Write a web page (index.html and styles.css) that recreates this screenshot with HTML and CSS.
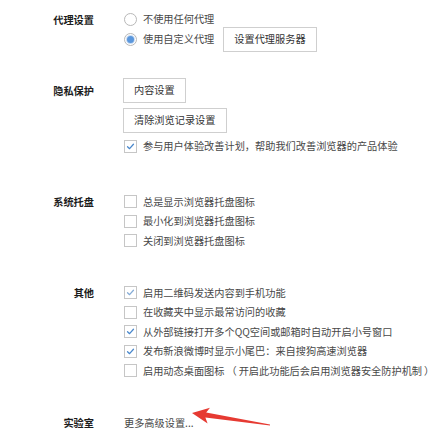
FILE: index.html
```html
<!DOCTYPE html>
<html lang="zh-CN">
<head>
<meta charset="utf-8">
<title>设置</title>
<link rel="stylesheet" href="styles.css">
</head>
<body>
<main class="settings">
  <section class="sec sec-proxy">
    <h3 class="label">代理设置</h3>
    <div class="opt opt-short"><span class="radio"></span><span class="txt">不使用任何代理</span></div>
    <div class="opt opt-tall"><span class="radio on"></span><span class="txt">使用自定义代理</span><button class="btn btn-inline">设置代理服务器</button></div>
  </section>

  <section class="sec sec-privacy">
    <h3 class="label">隐私保护</h3>
    <div class="btn-row"><button class="btn">内容设置</button></div>
    <div class="btn-row btn-row-next"><button class="btn">清除浏览记录设置</button></div>
    <div class="opt opt-after-btn"><span class="check on"><svg viewBox="0 0 13 13"><path d="M3 6.8 L5.4 9.1 L10 3.8"/></svg></span><span class="txt">参与用户体验改善计划，帮助我们改善浏览器的产品体验</span></div>
  </section>

  <section class="sec sec-tray">
    <h3 class="label">系统托盘</h3>
    <div class="opt"><span class="check"></span><span class="txt">总是显示浏览器托盘图标</span></div>
    <div class="opt"><span class="check"></span><span class="txt">最小化到浏览器托盘图标</span></div>
    <div class="opt"><span class="check"></span><span class="txt">关闭到浏览器托盘图标</span></div>
  </section>

  <section class="sec">
    <h3 class="label">其他</h3>
    <div class="opt"><span class="check on light"><svg viewBox="0 0 13 13"><path d="M3 6.8 L5.4 9.1 L10 3.8"/></svg></span><span class="txt">启用二维码发送内容到手机功能</span></div>
    <div class="opt"><span class="check"></span><span class="txt">在收藏夹中显示最常访问的收藏</span></div>
    <div class="opt"><span class="check on"><svg viewBox="0 0 13 13"><path d="M3 6.8 L5.4 9.1 L10 3.8"/></svg></span><span class="txt">从外部链接打开多个QQ空间或邮箱时自动开启小号窗口</span></div>
    <div class="opt"><span class="check on"><svg viewBox="0 0 13 13"><path d="M3 6.8 L5.4 9.1 L10 3.8"/></svg></span><span class="txt">发布新浪微博时显示小尾巴：来自搜狗高速浏览器</span></div>
    <div class="opt"><span class="check"></span><span class="txt">启用动态桌面图标<span class="paren">（</span>开启此功能后会启用浏览器安全防护机制<span class="paren">）</span></span></div>
  </section>

  <section class="sec">
    <h3 class="label">实验室</h3>
    <div class="opt"><span class="link">更多高级设置...</span></div>
  </section>
</main>

<svg class="annotation" viewBox="0 0 447 433" width="447" height="433" aria-hidden="true">
  <polygon fill="#e63a32" points="192,413 210,407.7 206.2,412.6 270,424.6 270,425.4 205.4,417.6 207.6,423.5"/>
</svg>
</body>
</html>
```

FILE: styles.css
```css
html, body {
  margin: 0;
  padding: 0;
  background: #ffffff;
}

body {
  position: relative;
  width: 447px;
  height: 433px;
  overflow: hidden;
  font-family: "Noto Sans CJK SC", "Noto Sans", sans-serif;
  font-size: 10.2px;
  color: #484848;
}

.settings {
  padding-top: 11px;
}

.sec {
  display: grid;
  grid-template-columns: 94px 1fr;
  column-gap: 29px;
  align-items: center;
}

.sec + .sec {
  margin-top: 32.5px;
}

.sec.sec-privacy {
  margin-top: 26px;
}

.sec.sec-tray {
  margin-top: 36px;
}

.sec > * {
  grid-column: 2;
}

.label {
  grid-column: 1;
  grid-row: 1;
  margin: 0;
  text-align: right;
  font-size: 10.2px;
  font-weight: 700;
  color: #1c1c1c;
  white-space: nowrap;
}

.opt {
  display: flex;
  align-items: center;
  height: 19.5px;
  white-space: nowrap;
}

.opt-short {
  height: 16px;
}

.opt-tall {
  height: 25px;
}

.opt-after-btn {
  margin-top: 3.5px;
}

.txt {
  margin-left: 6px;
  line-height: 1;
}

.paren {
  margin: 0 2px;
}

.link {
  margin-left: 1px;
  color: #484848;
}

.radio {
  position: relative;
  flex: none;
  box-sizing: border-box;
  width: 13px;
  height: 13px;
  margin-left: 1px;
  border: 1px solid #b8b8b8;
  border-radius: 50%;
  background: #fff;
}

.radio.on::after {
  content: "";
  position: absolute;
  left: 2px;
  top: 2px;
  width: 7px;
  height: 7px;
  border-radius: 50%;
  background: #5b97dc;
  box-shadow: 0 0 0 1px #c9dcf3;
}

.check {
  flex: none;
  box-sizing: border-box;
  width: 13px;
  height: 13px;
  margin-left: 1px;
  border: 1px solid #c6c6c6;
  background: #fff;
}

.check svg {
  display: block;
  width: 11px;
  height: 11px;
}

.check svg path {
  fill: none;
  stroke: #4a88cc;
  stroke-width: 1.5;
  stroke-linecap: round;
  stroke-linejoin: round;
}

.check.light svg path {
  stroke: #86acd6;
}

.btn-row {
  display: flex;
}

.btn-row-next {
  margin-top: 5px;
}

.btn {
  box-sizing: border-box;
  height: 25px;
  padding: 0 10px;
  border: 1px solid #cfcfcf;
  background: #ffffff;
  font-family: inherit;
  font-size: 10.2px;
  color: #333;
  line-height: 1;
  white-space: nowrap;
}

.btn-inline {
  margin-left: 9px;
}

.annotation {
  position: absolute;
  left: 0;
  top: 0;
  pointer-events: none;
}
```
